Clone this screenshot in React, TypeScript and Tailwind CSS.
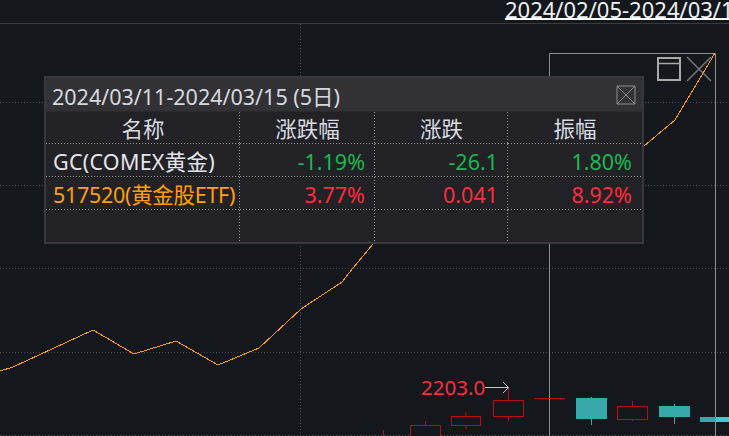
import React from "react";

const FONT = "font-['Noto_Sans','Noto_Sans_CJK_SC',sans-serif]";

const GRID_Y = [102, 185, 268, 352, 435];
const LINE_POINTS =
  "0,371 13,367 93,330 134,354 176,341 218,365 259,348 301,309 342,282 353,268 373,244 644,146 675,120 715,53";

// x, width, body top, body bottom, wick top, wick bottom
const RED_CANDLES = [
  [410, 31, 425, 445, 421, 445],
  [451, 30, 416, 425, 412, 429],
  [493, 31, 400, 416, 387, 421],
  [617, 31, 406, 419, 401, 421],
];
const TEAL_CANDLES = [
  [576, 31, 398, 419, 397, 425],
  [659, 31, 406, 417, 404, 424],
];

const ROWS = [
  { name: "GC(COMEX黄金)", pct: "-1.19%", chg: "-26.1", amp: "1.80%", nameColor: "text-[#e2e6ea] tracking-[0.25px]", color: "text-[#19b850]" },
  { name: "517520(黄金股ETF)", pct: "3.77%", chg: "0.041", amp: "8.92%", nameColor: "text-[#ffa000] tracking-[-0.3px]", color: "text-[#ff2b3a]" },
];

// dotted rules are 1px on, 2px off, wider apart than border-dotted
const DOTS_BOTH =
  "[background:repeating-linear-gradient(90deg,#98989c_0_1px,transparent_1px_3px)_left_bottom/100%_1px_no-repeat,repeating-linear-gradient(180deg,#98989c_0_1px,transparent_1px_3px)_right_top/1px_100%_no-repeat]";
const DOTS_BOTTOM =
  "[background:repeating-linear-gradient(90deg,#98989c_0_1px,transparent_1px_3px)_left_bottom/100%_1px_no-repeat]";
const DOTS_RIGHT =
  "[background:repeating-linear-gradient(180deg,#98989c_0_1px,transparent_1px_3px)_right_top/1px_100%_no-repeat]";

function Chart() {
  return (
    <svg width={729} height={412} viewBox="0 24 729 412" className="block">
      {GRID_Y.map((y) => (
        <line key={y} x1={0} x2={729} y1={y + 0.5} y2={y + 0.5} stroke="#45464a" strokeDasharray="1 2" />
      ))}
      <line x1={300.5} x2={300.5} y1={24} y2={436} stroke="#45464a" strokeDasharray="1 2" />

      {/* selected range */}
      <path d="M549.5 436V53.5H715.5V436" fill="none" stroke="#8f9090" strokeWidth={1} />

      {/* maximize + close */}
      <rect x={658} y={58} width={22} height={22} fill="none" stroke="#a9a9a9" strokeWidth={2} />
      <line x1={658} x2={680} y1={63.5} y2={63.5} stroke="#a9a9a9" strokeWidth={1.5} />
      <path d="M687 57L711 81M711 57L687 81" stroke="#77787a" strokeWidth={1.5} />

      <polyline points={LINE_POINTS} fill="none" stroke="#ff9a0a" strokeWidth={1} shapeRendering="crispEdges" />

      {/* candles */}
      <line x1={383.5} x2={383.5} y1={430} y2={436} stroke="#b80d14" />
      {RED_CANDLES.map(([x, w, top, bottom, wickTop, wickBottom]) => (
        <g key={x} stroke="#b80d14" fill="none">
          <line x1={x + w / 2} x2={x + w / 2} y1={wickTop} y2={wickBottom} />
          <rect x={x + 0.5} y={top + 0.5} width={w - 1} height={bottom - top} fill="#14171c" />
        </g>
      ))}
      <line x1={534} x2={565} y1={398.5} y2={398.5} stroke="#b80d14" />
      {TEAL_CANDLES.map(([x, w, top, bottom, wickTop, wickBottom]) => (
        <g key={x}>
          <line x1={x + w / 2} x2={x + w / 2} y1={wickTop} y2={wickBottom} stroke="#37a9ab" />
          <rect x={x} y={top} width={w} height={bottom - top} fill="#37a9ab" />
        </g>
      ))}
      <rect x={700} y={417} width={16} height={5} fill="#37a9ab" />
      <rect x={716} y={417} width={13} height={5} fill="#3ad0d2" />

      {/* high price arrow */}
      <path d="M485 387.5H508M503 382L508.5 387.5L503 393" fill="none" stroke="#c9c9c9" strokeWidth={1} />
    </svg>
  );
}

function Cell({ children, className = "", last = false }: { children?: React.ReactNode; className?: string; last?: boolean }) {
  return (
    <div className={`flex items-center pt-[2px] ${last ? DOTS_BOTTOM : DOTS_BOTH} ${className}`}>
      {children}
    </div>
  );
}

function Panel() {
  return (
    <div className="absolute left-[44px] top-[76px] w-[600px] h-[168px] border-2 border-[#39393d] bg-[#222126] flex flex-col">
      <div className="h-[34px] bg-[#323236] border-b border-[#2a2a2e] flex items-center justify-between px-[6px]">
        <span className="pt-[4px] text-[21.5px] leading-none text-[#d5d9de] whitespace-nowrap">2024/03/11-2024/03/15 (5日)</span>
        <svg width={20} height={20} viewBox="0 0 20 20">
          <path d="M1 1H19V19H1ZM1 1L19 19M19 1L1 19" fill="none" stroke="#8c8c8c" strokeWidth={1} />
        </svg>
      </div>
      <div className="grid grid-cols-[194px_135px_133px_1fr] grid-rows-[32px_33px_33px_1fr] flex-1 text-[21.5px] leading-none">
        <Cell className="justify-center text-[#d8dce2]">名称</Cell>
        <Cell className="justify-center text-[#d8dce2]">涨跌幅</Cell>
        <Cell className="justify-center text-[#d8dce2]">涨跌</Cell>
        <Cell last className="justify-center text-[#d8dce2]">振幅</Cell>
        {ROWS.map((row) => (
          <React.Fragment key={row.name}>
            <Cell className={`pl-[7px] whitespace-nowrap ${row.nameColor}`}>{row.name}</Cell>
            <Cell className={`justify-end pr-[10px] ${row.color}`}>{row.pct}</Cell>
            <Cell className={`justify-end pr-[10px] ${row.color}`}>{row.chg}</Cell>
            <Cell last className={`justify-end pr-[10px] ${row.color}`}>{row.amp}</Cell>
          </React.Fragment>
        ))}
        <div className={DOTS_RIGHT} />
        <div className={DOTS_RIGHT} />
        <div className={DOTS_RIGHT} />
        <div />
      </div>
    </div>
  );
}

export default function App() {
  return (
    <div className={`relative w-[729px] h-[436px] overflow-hidden bg-[#14171c] ${FONT}`}>
      <div className="h-[24px] border-b border-[#3a3b3e] pl-[505px]">
        <span className="inline-block h-[19px] border-b-2 border-white text-[22px] leading-[17px] text-[#eef1f4] whitespace-nowrap">
          2024/02/05-2024/03/15
        </span>
      </div>
      <Chart />
      <Panel />
      <div className="absolute left-[421px] top-[375px] text-[20.5px] leading-[24px] text-[#ff2b3a]">2203.0</div>
    </div>
  );
}
